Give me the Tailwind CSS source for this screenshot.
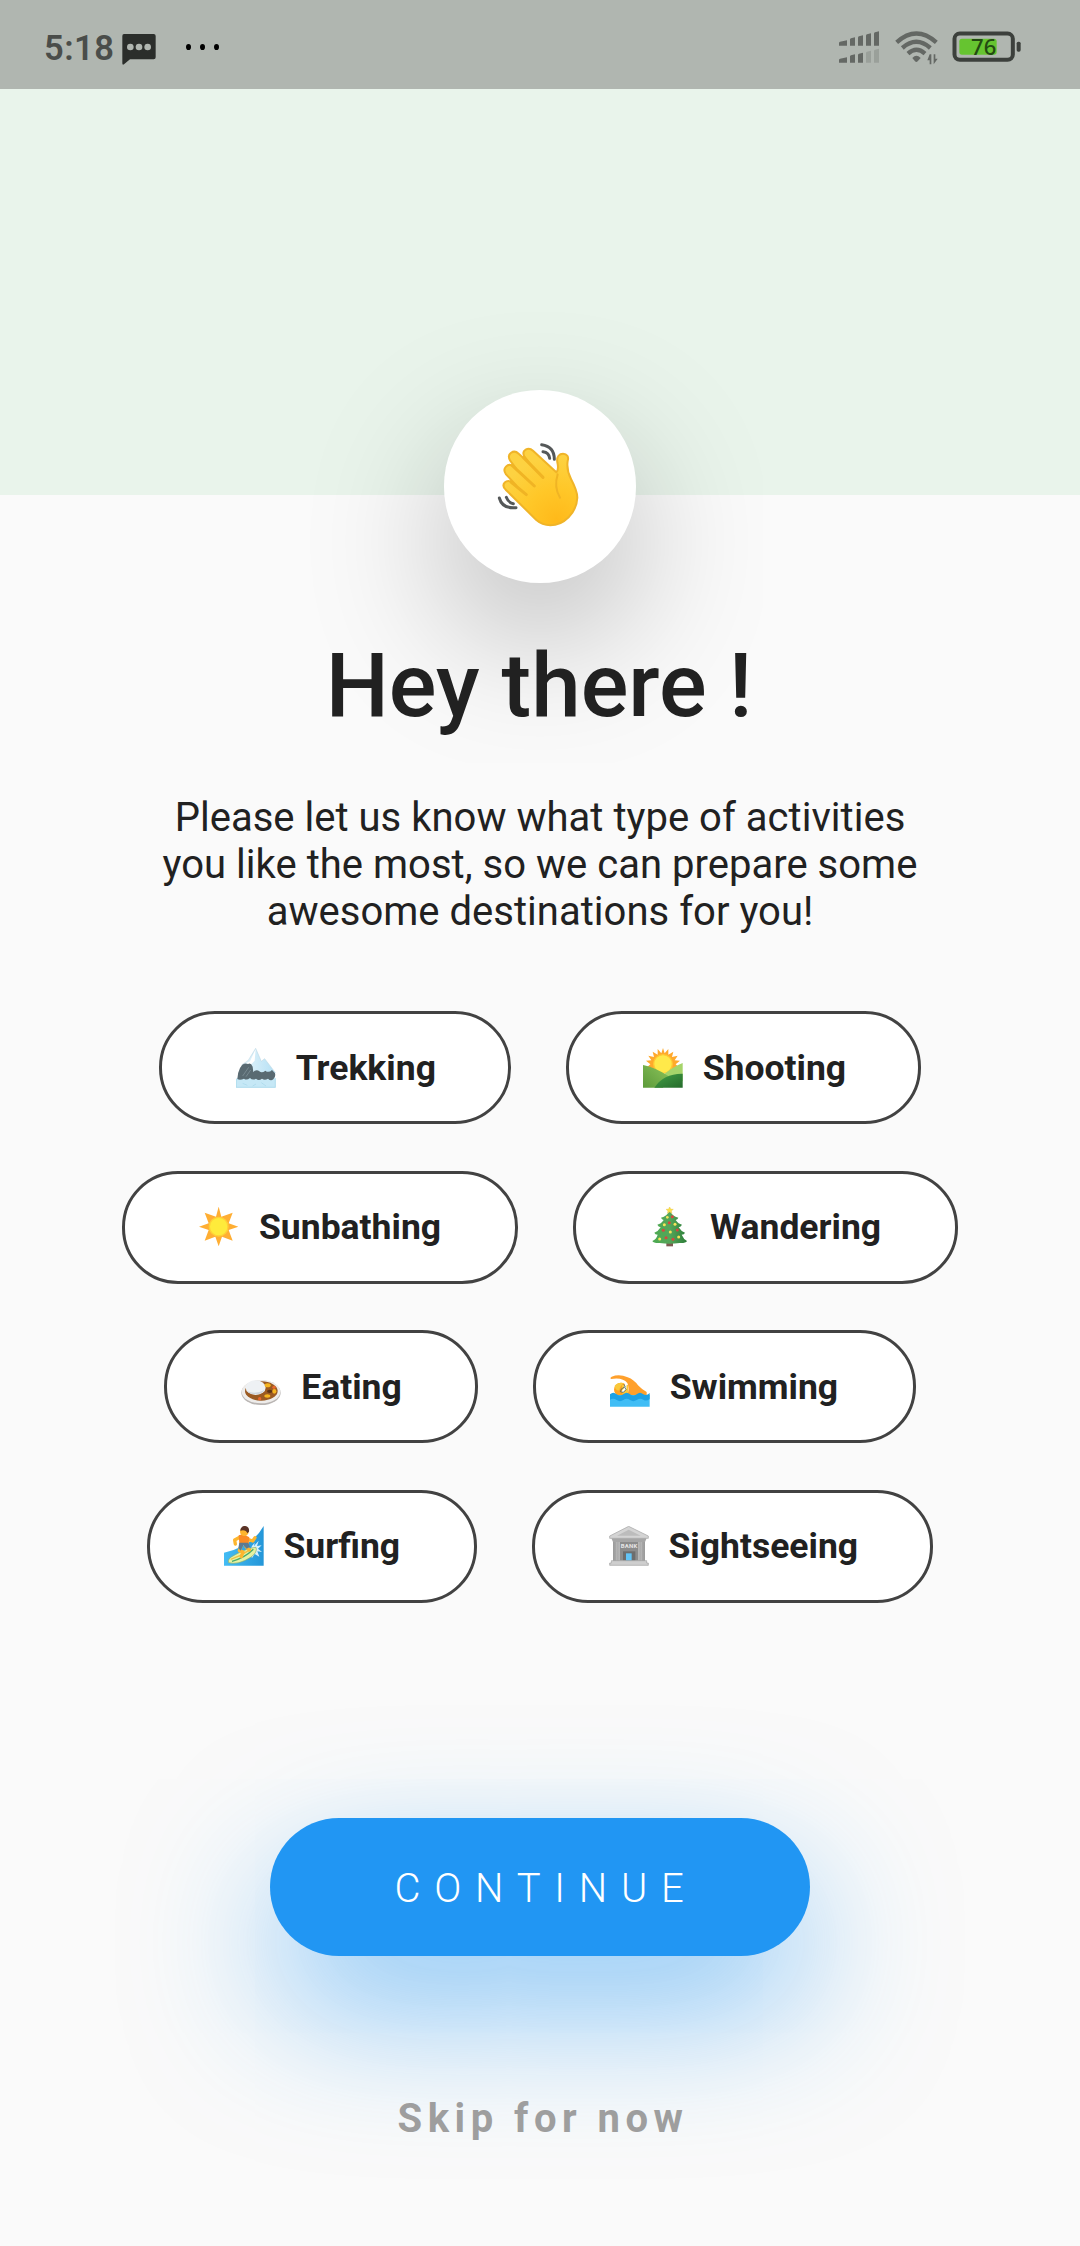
<!DOCTYPE html>
<html lang="en">
<head>
<meta charset="utf-8">
<title>Choose activities</title>
<script src="https://cdn.jsdelivr.net/npm/@tailwindcss/browser@4"></script>
</head>
<body class="h-[2246px] overflow-hidden bg-[#fafafa] font-['Roboto',sans-serif] text-[#212121]">
<div class="flex h-[2246px] w-[1080px] flex-col items-center">

  <!-- status bar -->
  <header class="flex h-[89px] w-full shrink-0 items-start justify-between bg-[#b0b6b0] pt-[31px] pr-[58px] pl-11">
    <div class="flex items-start">
      <span class="w-[78px] text-[34.5px] leading-[35px] font-semibold tracking-[0.5px] text-[#4a4d4a]">5:18</span>
      <svg class="mt-[3px]" width="34" height="32" viewBox="0 0 102 96"><path fill="#2b2e2b" d="M6 0H95Q101 0 101 6V70Q101 76 95 76H24L6 91Q1 94 1 88V6Q1 0 6 0Z"/><g fill="#b0b6b0"><circle cx="25" cy="39" r="10"/><circle cx="51" cy="39" r="10"/><circle cx="77" cy="39" r="10"/></g></svg>
      <svg class="mt-3 ml-[29px]" width="36" height="8" viewBox="0 0 36 8"><g fill="#000"><ellipse cx="3.5" cy="4" rx="2.5" ry="3.1"/><ellipse cx="17.5" cy="4" rx="2.5" ry="3.1"/><ellipse cx="31.5" cy="4" rx="2.5" ry="3.1"/></g></svg>
    </div>
    <div class="flex items-start">
      <svg width="41" height="33" viewBox="87 94 123 99"><g fill="#646864"><path d="M87 130Q87 127 90 126L111 122V138H87ZM120 119Q120 117 123 116L135 113V138H120ZM144 114Q144 111 147 110L159 107V138H144ZM168 108Q168 105 171 104L183 101V138H168ZM192 102Q192 99 195 98L207 95V138H192Z"/><path d="M87 181Q87 178 90 177L111 173V189H87ZM120 170Q120 168 123 167L135 164V189H120ZM144 166Q144 163 147 162L159 159V189H144Z"/></g><path fill="#9aa09a" d="M168 160Q168 157 171 156L183 153V189H168ZM192 154Q192 151 195 150L207 147V189H192Z"/></svg>
      <svg class="ml-[15px]" width="43" height="34" viewBox="254 94 129 102"><g fill="none" stroke="#646864" stroke-width="13"><path d="M259 128Q318 75 378 128"/><path d="M276 145Q318 108 360 145"/><path d="M293 162Q318 139 344 162"/></g><path fill="#646864" d="M306 175Q318 161 331 175L322 185Q318 189 314 185Z"/><g fill="#646864"><path d="M358 164H363V194H358V182H351ZM370 164H375V177H382L370 194Z"/></g></svg>
      <svg class="ml-[14px]" width="70" height="32" viewBox="427 94 210 96"><rect x="434.500" y="101.500" width="175" height="79" rx="16" fill="none" stroke="#3c403c" stroke-width="12"/><rect x="449" y="117" width="112" height="48" rx="8" fill="#66c430"/><rect x="621" y="126" width="12" height="30" rx="5" fill="#3c403c"/><text x="484" y="167" font-family="Noto Sans, sans-serif" font-size="66" font-weight="500" fill="#234a12" textLength="76">76</text></svg>
    </div>
  </header>

  <div class="h-[406px] w-full shrink-0 bg-[#e9f4eb]"></div>

  <!-- greeting -->
  <div class="relative -mt-[105px] flex h-[193px] w-[192px] shrink-0 items-center justify-center rounded-full bg-white shadow-[0_55px_140px_rgba(0,0,0,0.26)]">
    <svg class="mr-[5px] mb-[5px]" width="82" height="85" viewBox="230 215 246 255">
      <defs><radialGradient id="skin" gradientUnits="userSpaceOnUse" cx="410" cy="450" r="190"><stop offset="0" stop-color="#ffb91a"/><stop offset=".5" stop-color="#ffc728"/><stop offset="1" stop-color="#fdd241"/></radialGradient></defs>
      <path fill="url(#skin)" stroke="#f0b428" stroke-width="6" stroke-linejoin="round" d="M256 358C240 342 258 324 277 337L288 345L257 312C244 294 262 276 280 288L287 294L269 270C258 250 280 236 295 250L330 282L312 258C302 240 324 228 338 241L408 306Q416 298 411 276C408 258 418 250 428 250C440 250 446 260 442 272Q438 298 452 326Q471 362 471 382C469 428 430 465 390 465Q365 464 348 449Z"/>
      <g fill="none" stroke="#f0b424" stroke-width="9" stroke-linecap="round"><path d="M272 335L318 373"/><path d="M276 286L342 347"/><path d="M310 262L368 321"/><path stroke-width="6" d="M412 312Q400 350 419 382"/></g>
      <g fill="none" stroke="#555859" stroke-width="9" stroke-linecap="round"><path d="M364 223Q402 228 402 267"/><path d="M368 244Q386 246 388 264"/><path d="M237 383Q246 416 287 412"/><path d="M258 381Q264 397 279 400"/></g>
    </svg>
  </div>

  <h1 class="relative mt-[51px] mr-0.5 text-[89px] leading-[104px] font-medium whitespace-nowrap">Hey there !</h1>
  <p class="relative mt-[56px] text-center text-[40px] leading-[47px] tracking-[0.02px] whitespace-nowrap">Please let us know what type of activities<br>you like the most, so we can prepare some<br>awesome destinations for you!</p>

  <!-- activity choices -->
  <div class="mt-[76px] flex flex-col gap-[46.5px] text-[35.5px] leading-[40px] font-bold">
    <div class="flex justify-center gap-[55px]">
      <div class="flex h-[113px] w-[352px] items-center rounded-[56px] border-3 border-[#424242] bg-white pl-[74px]">
        <svg width="40" height="40" viewBox="0 0 120 120"><defs><linearGradient id="snow" x1="0" x2="1"><stop offset="0" stop-color="#e9f6fc"/><stop offset="1" stop-color="#b5e0f4"/></linearGradient></defs><path fill="url(#snow)" stroke="#b9d3de" stroke-width="1.500" d="M18 50L36 38L59 1L76 40L86 32L118 74L100 90H10Z"/><path fill="#fff" d="M59 3L42 40L30 46L44 50L56 38Z"/><path fill="#c6e8f6" d="M0 92Q8 84 18 90T40 90T62 90T84 92T106 88L119 90V119H0Z"/><path fill="#596a72" d="M19 50Q28 44 36 48Q44 42 50 56L52 72Q62 62 70 70Q78 76 88 68Q98 76 108 66L117 76Q120 86 112 94Q104 100 96 92Q86 98 78 92Q68 100 60 92Q50 98 42 90Q32 98 24 92Q12 98 4 93Q4 76 12 60Z"/><path stroke="#8798a0" stroke-width="2" d="M20 84L38 58M30 86L44 66"/><path stroke="#a6d6ea" stroke-width="2" fill="none" d="M1 93V118H118V91M20 106L34 112M60 108L50 114M76 104L90 114"/></svg>
        <span class="ml-[20px]">Trekking</span>
      </div>
      <div class="flex h-[113px] w-[355.500px] items-center rounded-[56px] border-3 border-[#424242] bg-white pl-[74px]">
        <svg width="40" height="40" viewBox="0 0 120 120"><defs><linearGradient id="hillA" x1="1" x2="0" y1="0" y2="1"><stop offset="0" stop-color="#8bc35a"/><stop offset="1" stop-color="#5c9a3a"/></linearGradient><linearGradient id="hillB" y1="0" y2="1" x1="0" x2="1"><stop offset="0" stop-color="#43a047"/><stop offset="1" stop-color="#256b2b"/></linearGradient></defs><path fill="#ffa92b" d="M60 0L65 16L76 3L76 20L91 11L87 27L104 23L95 37L111 38L98 49L108 58L60 74L12 58L22 49L9 38L25 37L16 23L33 27L29 11L44 20L44 3L55 16Z"/><circle cx="60" cy="48" r="28" fill="#ffe94a" stroke="#ffc832" stroke-width="4"/><path fill="#a5d46a" d="M50 90Q88 56 119 45V100H50Z"/><path fill="url(#hillA)" d="M0 51Q36 58 76 84L60 119H0Z"/><path fill="url(#hillB)" d="M34 119Q62 76 119 77V119Z"/></svg>
        <span class="ml-[20px]">Shooting</span>
      </div>
    </div>
    <div class="flex justify-center gap-[55px]">
      <div class="flex h-[113px] w-[396px] items-center rounded-[56px] border-3 border-[#424242] bg-white pl-[74px]">
        <svg width="40" height="40" viewBox="1 1 120 120"><path fill="#ffae33" d="M60 0L68 30L102 18L90 50L119 60L90 70L102 102L70 90L60 119L50 90L18 102L30 70L1 60L30 50L18 18L52 30Z"/><circle cx="60" cy="60" r="28" fill="#ffeb3b" stroke="#ffd036" stroke-width="4"/></svg>
        <span class="ml-[20px]">Sunbathing</span>
      </div>
      <div class="flex h-[113px] w-[385px] items-center rounded-[56px] border-3 border-[#424242] bg-white pl-[74px]">
        <svg width="40" height="40" viewBox="1 1 120 120"><defs><linearGradient id="pine" x1="0" x2="1"><stop offset="0" stop-color="#4caa50"/><stop offset=".5" stop-color="#55a65a"/><stop offset="1" stop-color="#2c7d38"/></linearGradient></defs><path fill="#7d5a50" d="M50 104H70V119H50Z"/><path fill="url(#pine)" d="M60 12Q68 28 86 33Q84 39 78 40Q86 52 97 54Q94 61 87 62Q94 74 106 78Q104 84 96 84Q102 98 112 103Q108 110 90 109Q60 114 30 109Q12 110 8 103Q20 98 24 84Q16 84 14 78Q26 74 33 62Q26 61 23 54Q34 52 42 40Q36 39 34 33Q52 28 60 12Z"/><path fill="#fbe14a" stroke="#e4b83c" stroke-width="1" d="M60 0L63 7L71 8L65 13L67 20L60 16L53 20L55 13L49 8L57 7Z"/><g fill="#f7e45a"><circle cx="53" cy="32" r="4"/><circle cx="44" cy="54" r="4.500"/><circle cx="76" cy="53" r="4.500"/><circle cx="62" cy="76" r="4.500"/><circle cx="30" cy="97" r="4.500"/><circle cx="87" cy="91" r="4.500"/></g><g fill="#d6483e"><circle cx="68" cy="30" r="4.500"/><circle cx="59" cy="48" r="4.500"/><circle cx="41" cy="71" r="4.500"/><circle cx="83" cy="70" r="4.500"/><circle cx="49" cy="93" r="4.500"/><circle cx="70" cy="98" r="4.500"/></g></svg>
        <span class="ml-[20px]">Wandering</span>
      </div>
    </div>
    <div class="flex justify-center gap-[55px]">
      <div class="flex h-[113px] w-[313.500px] items-center rounded-[56px] border-3 border-[#424242] bg-white pl-[74px]">
        <svg width="40" height="40" viewBox="0 0 120 120"><ellipse cx="60" cy="77" rx="59" ry="37" fill="#b9b5b3"/><ellipse cx="60" cy="74" rx="58" ry="35" fill="#eeecea"/><ellipse cx="61" cy="72" rx="49" ry="29" fill="#9b5a22"/><ellipse cx="44" cy="62" rx="30" ry="22" fill="#eef1f4"/><path fill="#cfd6dc" d="M18 72Q42 84 72 68Q62 82 43 82Q26 82 18 72Z"/><g fill="#f5b41f"><ellipse cx="80" cy="55" rx="9" ry="6"/><ellipse cx="79" cy="87" rx="9" ry="5"/><ellipse cx="100" cy="73" rx="6" ry="7"/></g><g fill="#e8672c"><circle cx="99" cy="61" r="5"/><circle cx="56" cy="95" r="5"/></g><ellipse cx="86" cy="73" rx="8" ry="5" fill="#5c3216"/></svg>
        <span class="ml-[20px]">Eating</span>
      </div>
      <div class="flex h-[113px] w-[383px] items-center rounded-[56px] border-3 border-[#424242] bg-white pl-[74px]">
        <svg width="40" height="40" viewBox="0 0 120 120"><path fill="#ffa02c" d="M3 36Q-1 32 5 29Q28 20 53 31Q72 38 84 55Q94 66 110 75V88H50Q60 68 52 48Q38 30 3 36Z"/><circle cx="33" cy="68" r="21" fill="#ffa21f"/><path fill="#f9c83a" d="M14 56Q24 44 42 48Q30 56 28 70Q16 72 14 56ZM36 54H54V80H36Z"/><path fill="#fff" d="M44 52L50 50L49 66L40 76L34 74L42 64Z"/><path fill="none" stroke="#48636b" stroke-width="2.500" d="M34 66L44 60L48 68L40 76L31 74ZM42 52L46 60"/><path fill="#40bdf5" d="M0 84H119V119H0Z"/><path fill="#1ea1e4" d="M0 82Q10 72 20 82Q30 90 40 82Q50 72 60 82Q70 90 80 82Q90 72 100 82Q110 88 119 78V96Q110 104 100 98Q90 92 80 99Q70 106 60 99Q50 92 40 99Q30 106 20 99Q10 92 0 98Z"/></svg>
        <span class="ml-[20px]">Swimming</span>
      </div>
    </div>
    <div class="flex justify-center gap-[55px]">
      <div class="flex h-[113px] w-[330px] items-center rounded-[56px] border-3 border-[#424242] bg-white pl-[74px]">
        <svg width="40" height="40" viewBox="0 0 120 120"><defs><linearGradient id="sea" x1="1" x2="0"><stop offset="0" stop-color="#2496d8"/><stop offset="1" stop-color="#43bcf4"/></linearGradient></defs><path fill="url(#sea)" d="M119 0V119H0V80Q84 62 119 0Z"/><path fill="#d7effc" d="M84 60L92 50L90 60L104 44L99 60L113 58L102 68L114 78L100 76L106 92L92 84L84 96L76 80Z"/><path fill="#e5f2a2" stroke="#8aae6c" stroke-width="2" d="M14 110Q8 98 34 86Q70 66 96 64Q102 78 80 94Q42 118 14 110Z"/><path fill="none" stroke="#47a96b" stroke-width="4" d="M24 106Q62 96 88 70"/><path stroke="#f0c040" stroke-width="4" fill="none" d="M20 100Q50 90 80 70"/><path fill="none" stroke="#fdb62f" stroke-width="10" stroke-linecap="round" stroke-linejoin="round" d="M47 34L32 42L34 54M71 40L86 45L93 35M52 58L46 74L57 78L52 92M66 62L76 72"/><path fill="#fa8b25" d="M44 28L58 24L76 34L74 54H46Z"/><path fill="#5d7a91" d="M46 50L72 50L78 62L68 68L58 58L50 74L43 66Z"/><circle cx="61" cy="17" r="13" fill="#fdb52e"/><path fill="#5b3427" d="M49 12Q52-1 64 0Q77 2 75 17L70 22Q66 10 49 14Z"/></svg>
        <span class="ml-[19.500px]">Surfing</span>
      </div>
      <div class="flex h-[113px] w-[401px] items-center rounded-[56px] border-3 border-[#424242] bg-white pl-[74px]">
        <svg width="40" height="40" viewBox="0 0 120 120"><defs><linearGradient id="col" x1="0" x2="1"><stop offset="0" stop-color="#9a9a9a"/><stop offset=".5" stop-color="#dcdcdc"/><stop offset="1" stop-color="#9a9a9a"/></linearGradient></defs><path fill="#b9b9b9" d="M12 46H108V106H12Z"/><path fill="#8c8c8c" d="M33 42H87V103H33Z"/><path fill="#6d6d6d" d="M42 76H79V103H42Z"/><g fill="url(#col)"><path d="M12 46H21V105H12ZM23 46H32V105H23ZM88 46H97V105H88ZM99 46H108V105H99Z"/></g><path fill="#62c4f6" d="M51 82H68V104H51Z"/><path fill="#d4d4d4" stroke="#a2a2a2" stroke-width="2" d="M2 30L59 1L118 30V37H2Z"/><path fill="#bcbcbc" d="M24 29L59 11L95 29Z"/><path fill="#a6a6a6" d="M7 37H113L108 48H12Z"/><path fill="#cecece" stroke="#a0a0a0" stroke-width="2" d="M7 104H113V111H118V118H2V111H7Z"/><text x="60" y="67" text-anchor="middle" font-size="18" font-weight="700" textLength="50" fill="#e6e6e6">BANK</text></svg>
        <span class="ml-[19.500px]">Sightseeing</span>
      </div>
    </div>
  </div>

  <!-- actions -->
  <button class="mt-[215px] flex h-[138px] w-[540px] shrink-0 items-center justify-center rounded-[69px] bg-[#2196f3] pt-1 pl-[12px] text-[40px] leading-[47px] font-light tracking-[13.75px] text-white shadow-[0_55px_140px_rgba(33,150,243,0.52)]">CONTINUE</button>
  <a class="relative mt-[139px] pl-[6px] text-[40px] leading-[47px] font-bold tracking-[5.500px] whitespace-nowrap text-[#9e9e9e]">Skip for now</a>
</div>
</body>
</html>
